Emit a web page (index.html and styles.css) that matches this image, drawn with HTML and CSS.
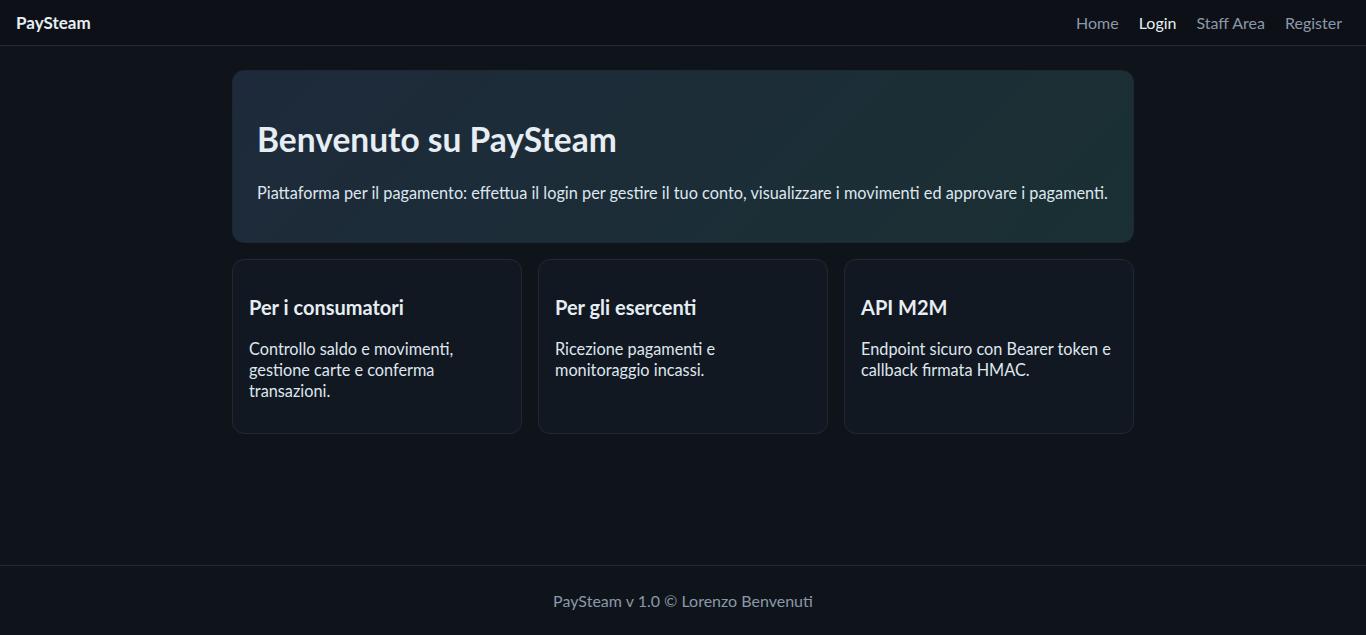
FILE: index.html
```html
<!DOCTYPE html>
<html lang="it">
<head>
<meta charset="utf-8">
<title>PaySteam</title>
<link rel="stylesheet" href="styles.css">
</head>
<body>
<header class="navbar">
  <a class="brand" href="#">PaySteam</a>
  <nav class="nav-links">
    <a href="#">Home</a>
    <a href="#" class="active">Login</a>
    <a href="#">Staff Area</a>
    <a href="#">Register</a>
  </nav>
</header>
<main class="main">
  <div class="container">
    <section class="hero">
      <h1>Benvenuto su PaySteam</h1>
      <p>Piattaforma per il pagamento: effettua il login per gestire il tuo conto, visualizzare i movimenti ed approvare i pagamenti.</p>
    </section>
    <section class="cards">
      <div class="card">
        <h3>Per i consumatori</h3>
        <p>Controllo saldo e movimenti, gestione carte e conferma transazioni.</p>
      </div>
      <div class="card">
        <h3>Per gli esercenti</h3>
        <p>Ricezione pagamenti e monitoraggio incassi.</p>
      </div>
      <div class="card">
        <h3>API M2M</h3>
        <p>Endpoint sicuro con Bearer token e callback firmata HMAC.</p>
      </div>
    </section>
  </div>
</main>
<footer class="footer">PaySteam v 1.0 © Lorenzo Benvenuti</footer>
</body>
</html>
```
FILE: styles.css
```css
* { box-sizing: border-box; }
html, body { margin: 0; padding: 0; }
body {
  font-family: "Lato", "Open Sans", sans-serif;
  background: #0f141b;
  color: #e6edf3;
  min-height: 100vh;
  display: flex;
  flex-direction: column;
  font-size: 16px;
}
a { text-decoration: none; }
.navbar {
  height: 46px;
  background: #0d1117;
  border-bottom: 1px solid #232a33;
  display: flex;
  align-items: center;
  justify-content: space-between;
  padding: 0 24px 0 16px;
}
.brand {
  color: #e6edf3;
  font-weight: 700;
  font-size: 17px;
}
.nav-links { display: flex; gap: 20px; }
.nav-links a { color: #8b98a9; font-size: 16px; }
.nav-links a.active { color: #e6edf3; }
.main { flex: 1; padding: 24px 0; }
.container { max-width: 902px; margin: 0 auto; }
.hero {
  background: linear-gradient(135deg, #1e2a3b 0%, #1a3033 100%);
  border: 1px solid #1c2733;
  border-radius: 12px;
  padding: 48px 24px 37px;
  margin-bottom: 16px;
}
.hero h1 {
  margin: 0 0 22px;
  font-size: 33.5px;
  line-height: 40px;
  font-weight: 700;
  color: #e6edf3;
}
.hero p { margin: 0; font-size: 16.3px; line-height: 24px; color: #dfe6ee; }
.cards {
  display: grid;
  grid-template-columns: repeat(3, 1fr);
  gap: 16px;
}
.card {
  background: #111821;
  border: 1px solid #212933;
  border-radius: 12px;
  padding: 35px 16px 32px;
  min-height: 175px;
}
.card h3 {
  margin: 0 0 19px;
  font-size: 20px;
  line-height: 24px;
  font-weight: 700;
}
.card p { margin: 0; font-size: 16.3px; line-height: 21px; color: #dfe6ee; }
.footer {
  height: 70px;
  border-top: 1px solid #232a33;
  display: flex;
  align-items: center;
  justify-content: center;
  color: #8b98a9;
  font-size: 16px;
}
```
